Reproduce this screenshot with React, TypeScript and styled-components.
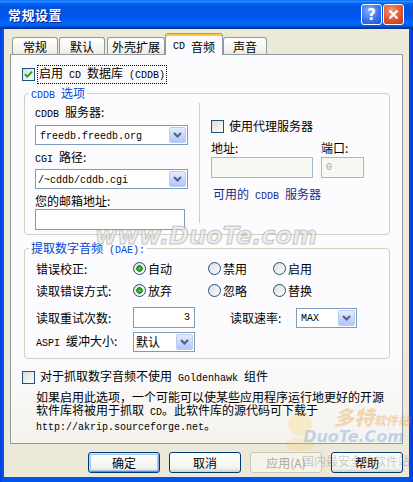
import styled, { createGlobalStyle } from "styled-components";

const GlobalStyle = createGlobalStyle`
  html, body { margin: 0; padding: 0; background: #ffffff; }
  body {
    font-family: "Noto Sans CJK SC", "DejaVu Sans", sans-serif;
    font-size: 12px;
    color: #000;
  }
  * { box-sizing: border-box; }
`;

const Window = styled.div`
  position: relative;
  width: 413px;
  height: 482px;
  display: flex;
  flex-direction: column;
  background: linear-gradient(90deg, #0831d9 0, #0055ea 2px, #0055ea 409px, #0831d9 413px);
  overflow: hidden;
`;

const TitleBar = styled.div`
  height: 29px;
  flex: none;
  display: flex;
  align-items: center;
  padding: 0 9px 0 8px;
  background: linear-gradient(
    to bottom,
    #0058ee 0%, #3593ff 4%, #288eff 6%, #127dff 8%, #036ffc 10%, #0262ee 14%,
    #0057e5 20%, #0054e3 24%, #0055eb 56%, #005bf5 66%, #026afe 76%, #0062ef 86%,
    #0052d6 92%, #0040ab 94%, #003092 100%
  );
`;

const Title = styled.div`
  flex: 1;
  color: #fff;
  font-weight: 700;
  font-size: 13px;
  letter-spacing: 0.5px;
  text-shadow: 1px 1px #0a1883;
`;

const CaptionButton = styled.div<{ $close?: boolean }>`
  width: 21px;
  height: 21px;
  margin-left: 1px;
  border: 1px solid #fff;
  border-radius: 3px;
  display: flex;
  align-items: center;
  justify-content: center;
  color: #fff;
  font-family: "DejaVu Sans", sans-serif;
  font-weight: 700;
  font-size: 15px;
  background: ${(p) =>
    p.$close
      ? "radial-gradient(circle at 40% 30%, #f29a80 0%, #e2542f 55%, #c43512 100%)"
      : "radial-gradient(circle at 40% 30%, #8cb2ff 0%, #3a73f0 55%, #1f4fd2 100%)"};
`;

const Body = styled.div`
  flex: 1;
  margin: 0 4px 5px 4px;
  background: #ece9d8;
  padding: 4px 6px 0 6px;
  display: flex;
  flex-direction: column;
`;

const TabStrip = styled.div`
  height: 21px;
  display: flex;
  align-items: flex-end;
  padding-left: 2px;
  position: relative;
  z-index: 1;
`;

const Tab = styled.div<{ $w: number; $ml: number; $active?: boolean }>`
  width: ${(p) => p.$w}px;
  margin-left: ${(p) => p.$ml}px;
  height: ${(p) => (p.$active ? 22 : 17)}px;
  margin-bottom: ${(p) => (p.$active ? -1 : 0)}px;
  border: 1px solid #919b9c;
  border-bottom: none;
  border-top-color: ${(p) => (p.$active ? "#e68b2c" : "#919b9c")};
  border-radius: 3px 3px 0 0;
  background: ${(p) =>
    p.$active ? "#fcfcfe" : "linear-gradient(#ffffff, #f3f3ef 70%, #ecebe5)"};
  box-shadow: ${(p) => (p.$active ? "inset 0 2px #ffc83c" : "none")};
  padding-top: ${(p) => (p.$active ? 4 : 0)}px;
  display: flex;
  align-items: center;
  justify-content: center;
  line-height: 15px;
  font-size: 12px;
`;

const Panel = styled.div`
  height: 390px;
  flex: none;
  border: 1px solid #919b9c;
  background: linear-gradient(#fcfcfe 75%, #f4f3ee);
  padding: 0 11px;
  display: flex;
  flex-direction: column;
`;

const CheckRow = styled.div<{ $mt: number }>`
  margin-top: ${(p) => p.$mt}px;
  display: flex;
  align-items: center;
  height: 16px;
  white-space: nowrap;
`;

const CheckBox = styled.span`
  width: 13px;
  height: 13px;
  flex: none;
  border: 1px solid #1c5180;
  background: linear-gradient(135deg, #dcdcd7, #ffffff);
  display: flex;
  align-items: center;
  justify-content: center;
`;

const CheckText = styled.span<{ $focus?: boolean }>`
  margin-left: ${(p) => (p.$focus ? 2 : 3)}px;
  padding: 0 1px;
  line-height: 14px;
  border: 1px dotted ${(p) => (p.$focus ? "#000" : "transparent")};
`;

const L = styled.span`
  font-family: "Liberation Mono", monospace;
  font-size: 10px;
`;

const Group = styled.div<{ $mt: number; $h: number }>`
  position: relative;
  margin: ${(p) => p.$mt}px 0 0 2px;
  width: 366px;
  height: ${(p) => p.$h}px;
  flex: none;
  border: 1px solid #d0d0bf;
  border-radius: 4px;
`;

const GroupLabel = styled.span`
  position: absolute;
  top: -8px;
  left: 4px;
  padding: 0 2px;
  background: #fcfcfe;
  color: #0046d5;
  line-height: 14px;
  white-space: nowrap;
`;

const CddbInner = styled.div`
  display: flex;
  padding-left: 10px;
`;

const Column = styled.div<{ $w: number; $pt: number }>`
  width: ${(p) => p.$w}px;
  padding-top: ${(p) => p.$pt}px;
  display: flex;
  flex-direction: column;
`;

const Separator = styled.div`
  width: 1px;
  height: 120px;
  margin: 9px 11px 0 11px;
  background: #d0d0bf;
`;

const FieldLabel = styled.div<{ $mt?: number; $w?: number }>`
  margin-top: ${(p) => p.$mt ?? 0}px;
  ${(p) => (p.$w ? `width: ${p.$w}px; flex: none;` : "")}
  line-height: 14px;
  white-space: nowrap;
`;

const Combo = styled.div<{ $w: number; $mt?: number; $pl?: number }>`
  width: ${(p) => p.$w}px;
  height: 20px;
  flex: none;
  margin-top: ${(p) => p.$mt ?? 0}px;
  border: 1px solid #7f9db9;
  background: #fff;
  display: flex;
  align-items: center;
  padding-left: ${(p) => p.$pl ?? 4}px;
  white-space: nowrap;
`;

const ComboText = styled.span`
  flex: 1;
  line-height: 16px;
`;

const ComboButton = styled.span`
  width: 17px;
  height: 16px;
  margin: 1px;
  border: 1px solid #bccbf2;
  border-radius: 2px;
  background: linear-gradient(#e6eefc, #c3d3fd 60%, #b2c7f6);
  display: flex;
  align-items: center;
  justify-content: center;
`;

const TextBox = styled.div<{ $w: number; $mt?: number; $disabled?: boolean; $right?: boolean }>`
  width: ${(p) => p.$w}px;
  height: 21px;
  flex: none;
  margin-top: ${(p) => p.$mt ?? 0}px;
  border: 1px solid ${(p) => (p.$disabled ? "#a6b7cc" : "#7f9db9")};
  background: ${(p) => (p.$disabled ? "#f7f7f3" : "#fff")};
  color: ${(p) => (p.$disabled ? "#a7a7a0" : "#000")};
  display: flex;
  align-items: center;
  justify-content: ${(p) => (p.$right ? "flex-end" : "flex-start")};
  padding: 0 4px;
  line-height: 14px;
`;

const ProxyGrid = styled.div`
  margin-top: 7px;
  display: grid;
  grid-template-columns: 102px 43px;
  column-gap: 8px;
  row-gap: 2px;
`;

const Link = styled.div`
  margin-top: 9px;
  margin-left: 2px;
  color: #1a2b8c;
  line-height: 14px;
  white-space: nowrap;
`;

const DaeInner = styled.div`
  padding: 9px 0 0 11px;
  display: flex;
  flex-direction: column;
`;

const RadioRow = styled.div<{ $mt?: number }>`
  margin-top: ${(p) => p.$mt ?? 0}px;
  height: 20px;
  display: grid;
  grid-template-columns: 97px 75px 65px auto;
  align-items: center;
  white-space: nowrap;
`;

const RadioItem = styled.span`
  display: flex;
  align-items: center;
`;

const Radio = styled.span<{ $on?: boolean }>`
  width: 13px;
  height: 13px;
  flex: none;
  border-radius: 50%;
  border: 1px solid #1c5180;
  margin-right: 2px;
  background: ${(p) =>
    p.$on
      ? "radial-gradient(circle, #62d85c 0, #21a121 2px, #1a8a1a 3px, transparent 3.5px), linear-gradient(135deg, #dcdcd7, #ffffff)"
      : "linear-gradient(135deg, #dcdcd7, #ffffff)"};
`;

const ControlRow = styled.div<{ $mt: number; $h: number }>`
  margin-top: ${(p) => p.$mt}px;
  height: ${(p) => p.$h}px;
  display: flex;
  align-items: center;
  white-space: nowrap;
`;

const Spacer = styled.span<{ $w: number }>`
  width: ${(p) => p.$w}px;
  flex: none;
`;

const Note = styled.p`
  margin: 6px 0 0 14px;
  line-height: 12.5px;
  white-space: nowrap;
`;

const ButtonRow = styled.div`
  margin-top: 8px;
  display: flex;
  justify-content: flex-end;
  gap: 9px;
`;

const Button = styled.div<{ $default?: boolean; $disabled?: boolean }>`
  width: 72px;
  height: 21px;
  border: 1px solid ${(p) => (p.$disabled ? "#c9c7ba" : "#003c74")};
  border-radius: 3px;
  background: ${(p) =>
    p.$disabled ? "#f5f4ea" : "linear-gradient(#ffffff, #f3f3ef 80%, #d6d0c5)"};
  color: ${(p) => (p.$disabled ? "#aca899" : "#000")};
  box-shadow: ${(p) =>
    p.$default
      ? "inset 0 1px #cee7ff, inset 1px 0 #bcd4f6, inset -1px 0 #89ade4, inset 0 -1px #6982ee, inset 0 0 0 2px #a9c6f5"
      : "none"};
  display: flex;
  align-items: center;
  justify-content: center;
  line-height: 14px;
`;

const Watermark = styled.div`
  position: absolute;
  left: 95px;
  top: 222px;
  font-family: "DejaVu Sans", sans-serif;
  font-weight: 700;
  font-style: italic;
  font-size: 24px;
  color: rgba(232, 232, 232, 0.75);
  -webkit-text-stroke: 1px rgba(150, 150, 150, 0.5);
  pointer-events: none;
  white-space: nowrap;
`;

const Logo = styled.div`
  position: absolute;
  left: 280px;
  top: 406px;
  width: 130px;
  pointer-events: none;
  display: flex;
  flex-direction: column;
  align-items: flex-end;
`;

const LogoTop = styled.div`
  display: flex;
  align-items: flex-end;
  color: rgba(236, 140, 40, 0.32);
  font-weight: 900;
  font-style: italic;
  white-space: nowrap;
`;

const LogoBig = styled.span`
  font-size: 20px;
  line-height: 22px;
`;

const LogoSmall = styled.span`
  font-size: 12px;
  line-height: 16px;
`;

const LogoEn = styled.div`
  margin-right: 6px;
  font-family: "DejaVu Sans", sans-serif;
  font-weight: 700;
  font-style: italic;
  font-size: 16px;
  line-height: 18px;
  color: rgba(60, 120, 220, 0.3);
`;

const LogoSlogan = styled.div`
  margin-top: 8px;
  font-size: 12px;
  line-height: 14px;
  color: rgba(110, 110, 110, 0.35);
  white-space: nowrap;
`;

const Mascot = styled.svg`
  position: absolute;
  left: 0;
  top: 4px;
`;

const Check = () => (
  <svg width="9" height="9" viewBox="0 0 9 9">
    <polyline points="1,4.2 3.3,6.6 8,1.6" fill="none" stroke="#21a121" strokeWidth="2" />
  </svg>
);

const Chevron = () => (
  <svg width="9" height="6" viewBox="0 0 9 6">
    <polyline points="1,1 4.5,4.5 8,1" fill="none" stroke="#4d6185" strokeWidth="2" />
  </svg>
);

const Select = ({ w, mt, pl, children }: { w: number; mt?: number; pl?: number; children: React.ReactNode }) => (
  <Combo $w={w} $mt={mt} $pl={pl}>
    <ComboText>{children}</ComboText>
    <ComboButton>
      <Chevron />
    </ComboButton>
  </Combo>
);

const Option = ({ on, children }: { on?: boolean; children: React.ReactNode }) => (
  <RadioItem>
    <Radio $on={on} />
    {children}
  </RadioItem>
);

export default function App() {
  return (
    <>
      <GlobalStyle />
      <Window>
        <TitleBar>
          <Title>常规设置</Title>
          <CaptionButton>?</CaptionButton>
          <CaptionButton $close>
            <svg width="11" height="11" viewBox="0 0 11 11">
              <path d="M1.5 1.5 L9.5 9.5 M9.5 1.5 L1.5 9.5" stroke="#fff" strokeWidth="2.2" />
            </svg>
          </CaptionButton>
        </TitleBar>
        <Body>
          <TabStrip>
            <Tab $w={46} $ml={0}>常规</Tab>
            <Tab $w={46} $ml={1}>默认</Tab>
            <Tab $w={58} $ml={2}>外壳扩展</Tab>
            <Tab $w={58} $ml={0} $active>
              <L>CD&nbsp;</L>音频
            </Tab>
            <Tab $w={44} $ml={0}>声音</Tab>
          </TabStrip>
          <Panel>
            <CheckRow $mt={11}>
              <CheckBox>
                <Check />
              </CheckBox>
              <CheckText $focus>
                启用<L> CD </L>数据库<L> (CDDB)</L>
              </CheckText>
            </CheckRow>

            <Group $mt={11} $h={142}>
              <GroupLabel>
                <L>CDDB </L>选项
              </GroupLabel>
              <CddbInner>
                <Column $w={153} $pt={11}>
                  <FieldLabel>
                    <L>CDDB </L>服务器:
                  </FieldLabel>
                  <Select w={153} mt={3}>
                    <L>freedb.freedb.org</L>
                  </Select>
                  <FieldLabel $mt={5}>
                    <L>CGI </L>路径:
                  </FieldLabel>
                  <Select w={153} mt={2} pl={2}>
                    <L>/~cddb/cddb.cgi</L>
                  </Select>
                  <FieldLabel $mt={5}>您的邮箱地址:</FieldLabel>
                  <TextBox $w={150} $mt={1} />
                </Column>
                <Separator />
                <Column $w={160} $pt={24}>
                  <CheckRow $mt={0}>
                    <CheckBox />
                    <CheckText>使用代理服务器</CheckText>
                  </CheckRow>
                  <ProxyGrid>
                    <FieldLabel>地址:</FieldLabel>
                    <FieldLabel>端口:</FieldLabel>
                    <TextBox $w={102} $disabled />
                    <TextBox $w={43} $disabled>
                      <L>0</L>
                    </TextBox>
                  </ProxyGrid>
                  <Link>
                    可用的<L> CDDB </L>服务器
                  </Link>
                </Column>
              </CddbInner>
            </Group>

            <Group $mt={13} $h={111}>
              <GroupLabel>
                提取数字音频<L> (DAE):</L>
              </GroupLabel>
              <DaeInner>
                <RadioRow>
                  <span>错误校正:</span>
                  <Option on>自动</Option>
                  <Option>禁用</Option>
                  <Option>启用</Option>
                </RadioRow>
                <RadioRow $mt={2}>
                  <span>读取错误方式:</span>
                  <Option on>放弃</Option>
                  <Option>忽略</Option>
                  <Option>替换</Option>
                </RadioRow>
                <ControlRow $mt={7} $h={21}>
                  <FieldLabel $w={97}>读取重试次数:</FieldLabel>
                  <TextBox $w={62} $right>
                    <L>3</L>
                  </TextBox>
                  <Spacer $w={35} />
                  <FieldLabel $w={66}>读取速率:</FieldLabel>
                  <Select w={61}>
                    <L>MAX</L>
                  </Select>
                </ControlRow>
                <ControlRow $mt={4} $h={20}>
                  <FieldLabel $w={97}>
                    <L>ASPI </L>缓冲大小:
                  </FieldLabel>
                  <Select w={62} pl={2}>
                    默认
                  </Select>
                </ControlRow>
              </DaeInner>
            </Group>

            <CheckRow $mt={10}>
              <CheckBox />
              <CheckText>
                对于抓取数字音频不使用<L> Goldenhawk </L>组件
              </CheckText>
            </CheckRow>
            <Note>
              如果启用此选项，一个可能可以使某些应用程序运行地更好的开源
              <br />
              软件库将被用于抓取<L> CD</L>。此软件库的源代码可下载于
              <br />
              <L>http://akrip.sourceforge.net</L>。
            </Note>
          </Panel>
          <ButtonRow>
            <Button $default>确定</Button>
            <Button>取消</Button>
            <Button $disabled>应用(A)</Button>
            <Button>帮助</Button>
          </ButtonRow>
        </Body>

        <Watermark>www.DuoTe.com</Watermark>
        <Logo>
          <Mascot width="40" height="42" viewBox="0 0 40 42">
            <circle cx="20" cy="14" r="12" fill="rgba(250, 200, 60, 0.22)" />
            <ellipse cx="20" cy="34" rx="14" ry="7" fill="rgba(250, 200, 60, 0.18)" />
          </Mascot>
          <LogoTop>
            <LogoBig>多特</LogoBig>
            <LogoSmall>软件站</LogoSmall>
          </LogoTop>
          <LogoEn>DuoTe.Com</LogoEn>
          <LogoSlogan>国内最安全的软件站</LogoSlogan>
        </Logo>
      </Window>
    </>
  );
}
